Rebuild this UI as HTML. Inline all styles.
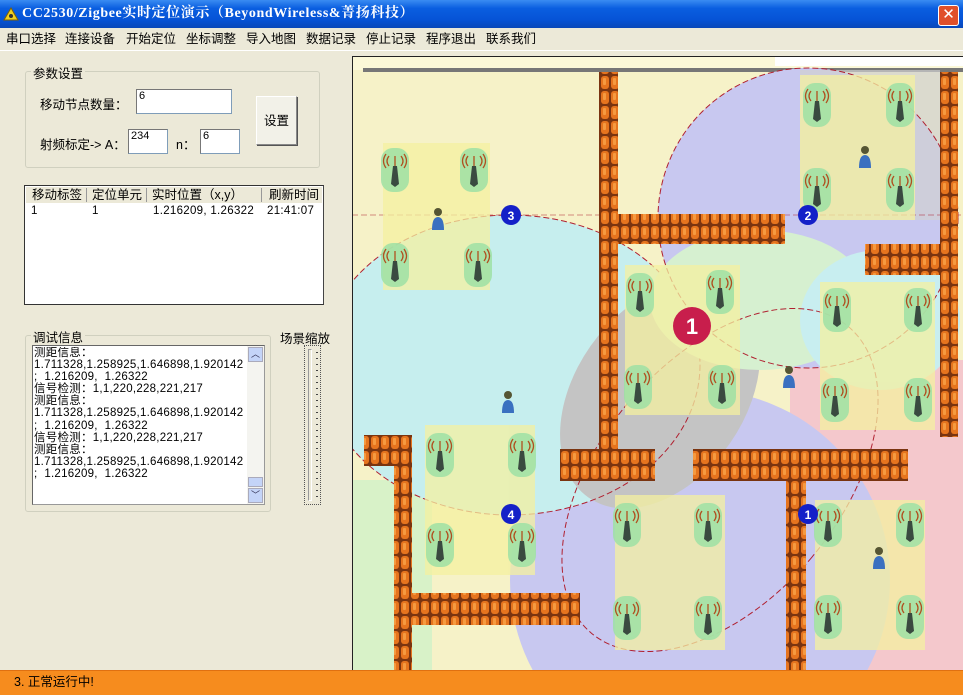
<!DOCTYPE html>
<html><head><meta charset="utf-8"><style>
*{margin:0;padding:0;box-sizing:border-box}
html,body{width:963px;height:695px;overflow:hidden}
body{background:#ece9d8;position:relative;font-family:"Liberation Sans","Noto Sans CJK SC",sans-serif;font-size:12px;color:#000}
.abs{position:absolute}
#title{left:0;top:0;width:963px;height:28px;background:linear-gradient(#3a8cf2,#0a5ee0 30%,#0653d6 70%,#0848b8);color:#fff;font-weight:bold;font-size:14px;font-family:"Liberation Serif","Noto Serif CJK SC",serif;line-height:28px;padding-left:22px;white-space:nowrap;letter-spacing:0.6px;overflow:hidden}
#close{left:938px;top:5px;width:21px;height:21px;background:#e0502a;border:1px solid #fff;border-radius:3px;color:#fff;font-size:15px;line-height:18px;text-align:center;font-family:"Liberation Sans",sans-serif}
#menu{left:0;top:28px;width:963px;height:22px;font-size:12.5px;line-height:22px}
#menu span{position:absolute;top:0}
.grp{border:1px solid #d0d0bf;border-radius:3px}
.lg{background:#ece9d8;padding:0 2px;font-size:12.5px}
.inp{background:#fff;border:1px solid #7f9db9;border-top-color:#777;border-left-color:#777;font-size:11px;padding-left:2px;line-height:13px}
#status{left:0;top:670px;width:963px;height:25px;background:#f68c1e;border-top:1px solid #e07010;font-size:12.5px;line-height:23px;padding-left:14px;overflow:hidden}
</style></head><body>
<div id="title" class="abs">CC2530/Zigbee实时定位演示（BeyondWireless&amp;菁扬科技）</div>
<svg class="abs" style="left:3px;top:7px" width="16" height="14"><polygon points="8,1 15,13 1,13" fill="#f0d020" stroke="#806000"/><circle cx="8" cy="9" r="2" fill="#333"/></svg>
<div id="close" class="abs">✕</div>
<div id="menu" class="abs"><span style="left:6px">串口选择</span><span style="left:65px">连接设备</span><span style="left:126px">开始定位</span><span style="left:186px">坐标调整</span><span style="left:246px">导入地图</span><span style="left:306px">数据记录</span><span style="left:366px">停止记录</span><span style="left:426px">程序退出</span><span style="left:486px">联系我们</span></div>
<div class="abs" style="left:0;top:50px;width:963px;height:1px;background:#fff"></div>

<div class="abs grp" style="left:25px;top:71px;width:295px;height:97px"></div>
<div class="abs lg" style="left:31px;top:63px">参数设置</div>
<div class="abs" style="left:40px;top:94px;font-size:12.5px">移动节点数量：</div>
<div class="abs inp" style="left:136px;top:89px;width:96px;height:25px">6</div>
<div class="abs" style="left:40px;top:134px;font-size:12.5px">射频标定-&gt; A：</div>
<div class="abs inp" style="left:128px;top:129px;width:40px;height:25px">234</div>
<div class="abs" style="left:176px;top:134px;font-size:12.5px">n：</div>
<div class="abs inp" style="left:200px;top:129px;width:40px;height:25px">6</div>
<div class="abs" style="left:256px;top:96px;width:41px;height:49px;border:1px solid #888;border-top-color:#fff;border-left-color:#fff;box-shadow:1px 1px 0 #555;background:#f2f1e8;font-size:12.5px;text-align:center;line-height:48px">设置</div>

<div class="abs" style="left:24px;top:185px;width:300px;height:120px;background:#fff;border:1px solid #333;border-right-color:#444"></div>
<div class="abs" style="left:26px;top:187px;width:296px;height:16px;background:#ece9d8;font-size:12.5px;line-height:16px">
<span class="abs" style="left:6px">移动标签</span><span class="abs" style="left:66px">定位单元</span><span class="abs" style="left:126px">实时位置（x,y）</span><span class="abs" style="left:243px">刷新时间</span>
<i class="abs" style="left:60px;top:1px;width:1px;height:14px;background:#999"></i><i class="abs" style="left:120px;top:1px;width:1px;height:14px;background:#999"></i><i class="abs" style="left:235px;top:1px;width:1px;height:14px;background:#999"></i></div>
<div class="abs" style="left:31px;top:205px;font-size:11.5px">1</div>
<div class="abs" style="left:92px;top:205px;font-size:11.5px">1</div>
<div class="abs" style="left:153px;top:205px;font-size:11.5px;letter-spacing:0.3px">1.216209, 1.26322</div>
<div class="abs" style="left:267px;top:205px;font-size:11.5px;letter-spacing:0.3px">21:41:07</div>

<div class="abs grp" style="left:25px;top:335px;width:246px;height:177px"></div>
<div class="abs lg" style="left:31px;top:327px">调试信息</div>
<div class="abs" style="left:32px;top:345px;width:233px;height:160px;background:#fff;border:1px solid #999;border-top-color:#666;border-left-color:#666"></div>
<div class="abs" style="left:34px;top:347px;width:212px;height:140px;overflow:hidden;font-size:11.5px;line-height:12.1px;white-space:pre;letter-spacing:0.25px">测距信息：
1.711328,1.258925,1.646898,1.920142
;  1.216209,  1.26322
信号检测：1,1,220,228,221,217
测距信息：
1.711328,1.258925,1.646898,1.920142
;  1.216209,  1.26322
信号检测：1,1,220,228,221,217
测距信息：
1.711328,1.258925,1.646898,1.920142
;  1.216209,  1.26322</div>
<div class="abs" style="left:247px;top:346px;width:17px;height:158px;background:#f4f4f0"></div>
<div class="abs" style="left:248px;top:347px;width:15px;height:15px;background:#c4d4f8;border:1px solid #aab;color:#335;font-size:9px;text-align:center;line-height:13px;overflow:hidden">︿</div>
<div class="abs" style="left:248px;top:477px;width:15px;height:10px;background:#c4d4f8;border:1px solid #aab"></div>
<div class="abs" style="left:248px;top:488px;width:15px;height:15px;background:#c4d4f8;border:1px solid #aab;color:#335;font-size:9px;text-align:center;line-height:13px;overflow:hidden">﹀</div>
<div class="abs" style="left:280px;top:328px;font-size:12.5px">场景缩放</div>
<div class="abs" style="left:304px;top:345px;width:17px;height:160px;border:1px dotted #555"></div>
<div class="abs" style="left:308px;top:349px;width:4px;height:152px;border:1px solid #999;border-right-color:#fff;border-bottom-color:#fff"></div>
<div class="abs" style="left:316px;top:352px;width:2px;height:148px;background:repeating-linear-gradient(#444 0 1px,transparent 1px 6px)"></div>

<svg class="abs" style="left:352px;top:56px" width="611" height="614" viewBox="352 56 611 614">
<defs>
<pattern id="br" x="0" y="0" width="10" height="15" patternUnits="userSpaceOnUse"><rect width="10" height="15" fill="#7a3410"/><rect x="1" y="1" width="8" height="13" rx="3" fill="#e6741e"/><rect x="3" y="3" width="3" height="7" rx="1" fill="#f59a40"/></pattern>
<g id="t"><rect x="-14" y="-22" width="28" height="44" rx="12" fill="#9ee0a4" opacity=".85"/><path d="M-2 -4 L2 -4 L4 14 L0 17 L-4 14 Z" fill="#3a4a40"/><path d="M-6 -14 q-4 5 0 10 M6 -14 q4 5 0 10 M-9 -16 q-5 7 0 14 M9 -16 q5 7 0 14 M0 -14 V-4" stroke="#b05020" stroke-width="1.3" fill="none"/></g>
<g id="p"><circle cx="0" cy="-8" r="4" fill="#553"/><path d="M-6 10 Q-6 -3 0 -3 Q6 -3 6 10 Z" fill="#3a70c0"/></g>
</defs>
<rect x="352" y="56" width="611" height="614" fill="#f6f2c8"/>
<rect x="352" y="56" width="611" height="14" fill="#fbf8d8"/>
<rect x="775" y="56" width="188" height="10" fill="#fff"/>
<rect x="363" y="68" width="600" height="4" fill="#777"/>
<rect x="352" y="480" width="80" height="190" fill="#d8f2c8"/>
<rect x="790" y="360" width="173" height="310" fill="#f4c8cc"/>
<circle cx="700" cy="580" r="190" fill="#c8c8f0"/>
<ellipse cx="510" cy="365" rx="190" ry="150" fill="#c6eeee"/>
<ellipse cx="660" cy="395" rx="85" ry="125" transform="rotate(35 660 395)" fill="#c4c4c4"/>
<ellipse cx="510" cy="365" rx="190" ry="150" fill="none" stroke="#b02030" stroke-dasharray="6 3"/>
<circle cx="808" cy="218" r="150" fill="#c8c8f0"/>
<rect x="800" y="70" width="140" height="150" fill="#d0d0d0" opacity=".7"/>
<ellipse cx="760" cy="300" rx="110" ry="70" fill="#d6f0d0"/>
<ellipse cx="880" cy="320" rx="80" ry="70" fill="#c8eef0"/>
<circle cx="808" cy="218" r="150" fill="none" stroke="#b02030" stroke-dasharray="6 3"/>
<ellipse cx="720" cy="480" rx="120" ry="200" transform="rotate(40 720 480)" fill="none" stroke="#b02030" stroke-dasharray="6 3"/>
<path d="M352 215 H963" stroke="#b02030" stroke-dasharray="6 3" fill="none" opacity=".5"/>
<g fill="#f4f0a0" opacity=".75">
<rect x="383" y="143" width="107" height="147"/><rect x="800" y="75" width="115" height="145"/><rect x="625" y="265" width="115" height="150"/><rect x="820" y="282" width="115" height="148"/><rect x="425" y="425" width="110" height="150"/><rect x="615" y="495" width="110" height="155"/><rect x="815" y="500" width="110" height="150"/></g>
<g fill="url(#br)">
<rect x="599" y="72" width="19" height="390"/><rect x="600" y="214" width="185" height="30"/><rect x="560" y="449" width="95" height="32"/>
<rect x="940" y="72" width="18" height="365"/><rect x="865" y="244" width="80" height="31"/><rect x="693" y="449" width="215" height="32"/>
<rect x="786" y="449" width="20" height="221"/><rect x="364" y="435" width="48" height="31"/><rect x="394" y="435" width="18" height="235"/><rect x="412" y="593" width="168" height="32"/></g>
<use href="#t" x="395" y="170"/><use href="#t" x="474" y="170"/><use href="#t" x="395" y="265"/><use href="#t" x="478" y="265"/>
<use href="#t" x="817" y="105"/><use href="#t" x="900" y="105"/><use href="#t" x="817" y="190"/><use href="#t" x="900" y="190"/>
<use href="#t" x="640" y="295"/><use href="#t" x="720" y="292"/><use href="#t" x="638" y="387"/><use href="#t" x="722" y="387"/>
<use href="#t" x="837" y="310"/><use href="#t" x="918" y="310"/><use href="#t" x="835" y="400"/><use href="#t" x="918" y="400"/>
<use href="#t" x="440" y="455"/><use href="#t" x="522" y="455"/><use href="#t" x="440" y="545"/><use href="#t" x="522" y="545"/>
<use href="#t" x="627" y="525"/><use href="#t" x="708" y="525"/><use href="#t" x="627" y="618"/><use href="#t" x="708" y="618"/>
<use href="#t" x="828" y="525"/><use href="#t" x="910" y="525"/><use href="#t" x="828" y="617"/><use href="#t" x="910" y="617"/>
<use href="#p" x="438" y="220"/><use href="#p" x="865" y="158"/><use href="#p" x="508" y="403"/><use href="#p" x="789" y="378"/><use href="#p" x="879" y="559"/>
<g font-family="Liberation Sans,sans-serif" font-weight="bold" font-size="12" fill="#fff" text-anchor="middle">
<circle cx="511" cy="215" r="10" fill="#1420c8"/><text x="511" y="220">3</text>
<circle cx="808" cy="215" r="10" fill="#1420c8"/><text x="808" y="220">2</text>
<circle cx="511" cy="514" r="10" fill="#1420c8"/><text x="511" y="519">4</text>
<circle cx="808" cy="514" r="10" fill="#1420c8"/><text x="808" y="519">1</text>
<circle cx="692" cy="326" r="19" fill="#c81e4c"/><text x="692" y="334" font-size="22">1</text></g>
<rect x="352.5" y="56.5" width="611" height="614" fill="none" stroke="#222"/>
</svg>
<div id="status" class="abs">3.  正常运行中!</div>
</body></html>
